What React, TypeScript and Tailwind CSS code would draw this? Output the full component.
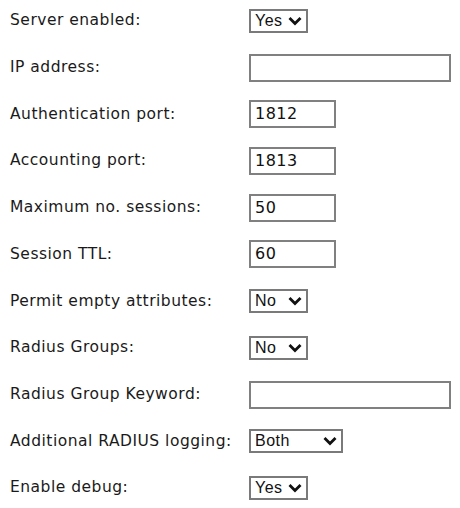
import React from "react";

type Row =
  | { label: string; kind: "select"; value: string; width: string }
  | { label: string; kind: "input"; value: string; width: string };

const rows: Row[] = [
  { label: "Server enabled:", kind: "select", value: "Yes", width: "w-[59px]" },
  { label: "IP address:", kind: "input", value: "", width: "w-[202px]" },
  { label: "Authentication port:", kind: "input", value: "1812", width: "w-[87px]" },
  { label: "Accounting port:", kind: "input", value: "1813", width: "w-[87px]" },
  { label: "Maximum no. sessions:", kind: "input", value: "50", width: "w-[87px]" },
  { label: "Session TTL:", kind: "input", value: "60", width: "w-[87px]" },
  { label: "Permit empty attributes:", kind: "select", value: "No", width: "w-[59px]" },
  { label: "Radius Groups:", kind: "select", value: "No", width: "w-[59px]" },
  { label: "Radius Group Keyword:", kind: "input", value: "", width: "w-[202px]" },
  { label: "Additional RADIUS logging:", kind: "select", value: "Both", width: "w-[94px]" },
  { label: "Enable debug:", kind: "select", value: "Yes", width: "w-[59px]" },
];

function Chevron() {
  return (
    <svg width="14" height="10" viewBox="0 0 14 10" className="shrink-0">
      <path d="M1.5 2 L7 7.5 L12.5 2" fill="none" stroke="#111" strokeWidth="2.8" />
    </svg>
  );
}

function FakeSelect({ value, width }: { value: string; width: string }) {
  return (
    <div
      className={`${width} h-[24px] flex items-center justify-between border-2 border-[#7a7a7a] bg-white pl-[4px] pr-[4px] text-[16px] text-[#111] font-['Liberation_Sans',Arial,sans-serif]`}
    >
      <span>{value}</span>
      <Chevron />
    </div>
  );
}

function TextBox({ value, width }: { value: string; width: string }) {
  return (
    <div
      className={`${width} h-[28px] flex items-center border-2 border-[#808080] bg-white px-[4px] text-[16px] text-[#111] font-['DejaVu_Sans',Verdana,sans-serif]`}
    >
      {value}
    </div>
  );
}

export default function App() {
  return (
    <div className="w-[460px] h-[508px] bg-white pt-[7px] flex flex-col gap-[18.7px] font-['DejaVu_Sans',Verdana,sans-serif] text-[15.5px] tracking-[0.5px] text-[#1a1a1a] overflow-hidden">
      {rows.map((r) => (
        <div key={r.label} className="flex items-center h-[28px]">
          <div className="w-[249px] pl-[10px] shrink-0 whitespace-nowrap">{r.label}</div>
          {r.kind === "select" ? (
            <FakeSelect value={r.value} width={r.width} />
          ) : (
            <TextBox value={r.value} width={r.width} />
          )}
        </div>
      ))}
    </div>
  );
}
